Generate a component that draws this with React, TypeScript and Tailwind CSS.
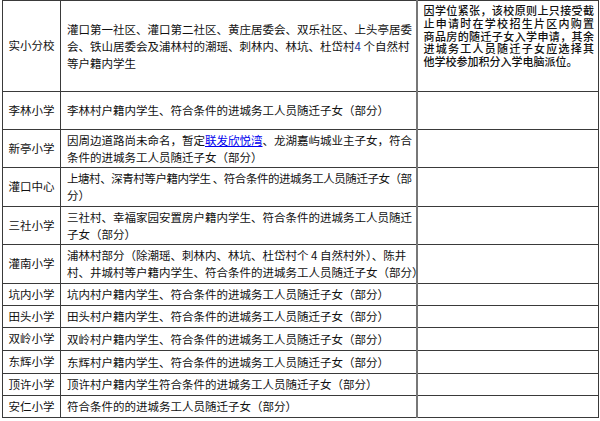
import React from 'react';

type Row = {
  school: string;
  lines: React.ReactNode[];
  h: number;
};

const rows: Row[] = [
  {
    school: '李林小学',
    lines: ['李林村户籍内学生、符合条件的进城务工人员随迁子女（部分）'],
    h: 38,
  },
  {
    school: '新亭小学',
    lines: [
      <>
        因周边道路尚未命名，暂定
        <a href="#" className="text-[#0000ee] underline underline-offset-[1px]">
          联发欣悦湾
        </a>
        、龙湖嘉屿城业主子女，符合
      </>,
      '条件的进城务工人员随迁子女（部分）',
    ],
    h: 38,
  },
  {
    school: '灌口中心',
    lines: [
      <span className="tracking-[-0.45px]">上塘村、深青村等户籍内学生 、符合条件的进城务工人员随迁子女（部</span>,
      '分）',
    ],
    h: 39,
  },
  {
    school: '三社小学',
    lines: ['三社村、幸福家园安置房户籍内学生、符合条件的进城务工人员随迁', '子女（部分）'],
    h: 38,
  },
  {
    school: '灌南小学',
    lines: [
      '浦林村部分（除潮瑶、刺林内、林坑、杜岱村个 4 自然村外）、陈井',
      '村、井城村等户籍内学生、符合条件的进城务工人员随迁子女（部分）',
    ],
    h: 39,
  },
  { school: '坑内小学', lines: ['坑内村户籍内学生、符合条件的进城务工人员随迁子女（部分）'], h: 22 },
  { school: '田头小学', lines: ['田头村户籍内学生、符合条件的进城务工人员随迁子女（部分）'], h: 22 },
  { school: '双岭小学', lines: ['双岭村户籍内学生、符合条件的进城务工人员随迁子女（部分）'], h: 23 },
  { school: '东辉小学', lines: ['东辉村户籍内学生、符合条件的进城务工人员随迁子女（部分）'], h: 23 },
  { school: '顶许小学', lines: ['顶许村户籍内学生符合条件的进城务工人员随迁子女（部分）'], h: 22 },
  { school: '安仁小学', lines: ['符合条件的的进城务工人员随迁子女（部分）'], h: 22 },
];

const note = [
  '因学位紧张，该校原则上只接受截',
  '止申请时在学校招生片区内购置',
  '商品房的随迁子女入学申请，其余',
  '进城务工人员随迁子女应选择其',
];

export default function App() {
  return (
    <div
      className="w-[600px] h-[421px] bg-white text-[#111] text-[11.5px] overflow-hidden pl-[2px]"
      style={{ fontFamily: '"Noto Sans CJK SC", "Noto Sans", sans-serif' }}
    >
      <table className="table-fixed border-collapse w-[596px]">
        <colgroup>
          <col className="w-[58px]" />
          <col className="w-[356px]" />
          <col className="w-[182px]" />
        </colgroup>
        <tbody>
          <tr className="h-[91px]">
            <td className="border border-[#3a3a3a] text-center align-middle p-0">实小分校</td>
            <td className="border border-[#3a3a3a] align-middle pl-[6px] pr-0 py-0 leading-[17px] whitespace-nowrap">
              <div>灌口第一社区、灌口第二社区、黄庄居委会、双乐社区、上头亭居委</div>
              <div>
                会、铁山居委会及浦林村的潮瑶、刺林内、林坑、杜岱村
                <span className="text-[#1e3a9a]">4</span> 个自然村
              </div>
              <div>等户籍内学生</div>
            </td>
            <td className="border border-[#3a3a3a] border-l-2 border-l-[#777] align-top pl-[6px] pr-[4px] pt-[3px] pb-0 text-[11px] font-medium leading-[12.8px] whitespace-nowrap">
              {note.map((l) => (
                <div key={l} className="text-justify [text-align-last:justify]">
                  {l}
                </div>
              ))}
              <div>他学校参加积分入学电脑派位。</div>
            </td>
          </tr>
          {rows.map((r) => (
            <tr key={r.school} style={{ height: r.h }}>
              <td className="border border-[#3a3a3a] text-center align-middle p-0">{r.school}</td>
              <td className="border border-[#3a3a3a] align-middle pl-[6px] pr-0 py-0 leading-[17px] whitespace-nowrap">
                {r.lines.map((l, i) => (
                  <div key={i}>{l}</div>
                ))}
              </td>
              <td className="border border-[#3a3a3a] border-l-2 border-l-[#777] p-0"></td>
            </tr>
          ))}
        </tbody>
      </table>
    </div>
  );
}
